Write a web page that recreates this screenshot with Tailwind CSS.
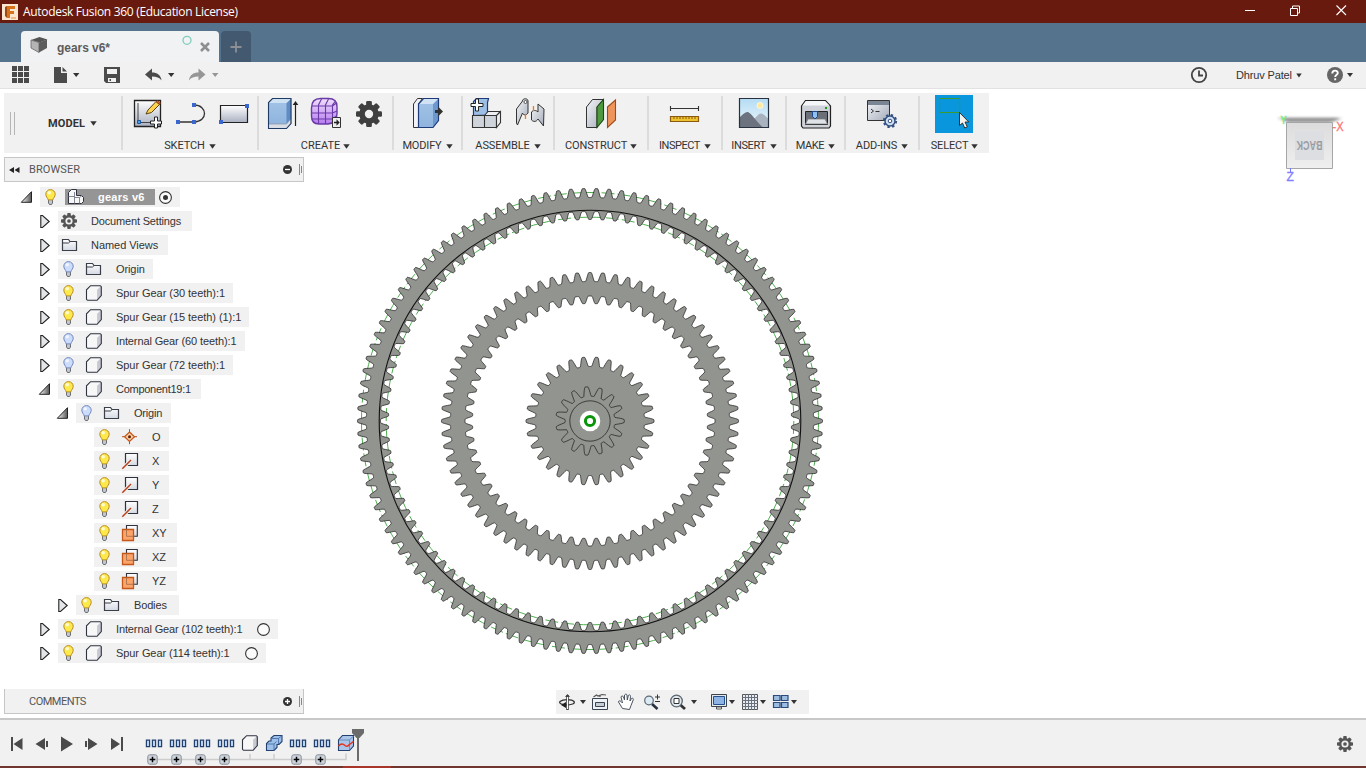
<!DOCTYPE html>
<html lang="en">
<head>
<meta charset="utf-8">
<title>Autodesk Fusion 360 (Education License)</title>
<script src="https://cdn.jsdelivr.net/npm/@tailwindcss/browser@4"></script>
</head>
<body class="w-[1366px] h-[768px] overflow-hidden flex flex-col bg-white font-['Liberation_Sans',Arial,sans-serif] text-[11px] text-[#333]">

<svg class="absolute w-0 h-0">
  <defs>
    <linearGradient id="gWhite" x1="0" y1="0" x2="0" y2="1"><stop offset="0" stop-color="#fff"/><stop offset="1" stop-color="#a9b0c0"/></linearGradient>
    <linearGradient id="gBlue" x1="0" y1="0" x2="0" y2="1"><stop offset="0" stop-color="#a3c4e6"/><stop offset="1" stop-color="#8fb4de"/></linearGradient>
    <linearGradient id="gSteel" x1="0" y1="0" x2="1" y2="1"><stop offset="0" stop-color="#f4f5f8"/><stop offset="1" stop-color="#a4acba"/></linearGradient>
    <linearGradient id="gPurple" x1="0" y1="0" x2="0" y2="1"><stop offset="0" stop-color="#efe0fb"/><stop offset="1" stop-color="#b67cf0"/></linearGradient>
    <linearGradient id="gTri" x1="0" y1="0" x2="1" y2="0"><stop offset="0" stop-color="#fff"/><stop offset="1" stop-color="#555"/></linearGradient>
    <linearGradient id="gSky" x1="0" y1="0" x2="0" y2="1"><stop offset="0" stop-color="#b4dcf4"/><stop offset="1" stop-color="#eef7fc"/></linearGradient>
    <linearGradient id="gDoc" x1="0" y1="0" x2="0" y2="1"><stop offset="0" stop-color="#fff"/><stop offset="1" stop-color="#d4d9e2"/></linearGradient>
    <linearGradient id="gCube" x1="0" y1="0" x2="0" y2="1"><stop offset="0" stop-color="#dcdcdc"/><stop offset="1" stop-color="#efefef"/></linearGradient>
    <symbol id="cog" viewBox="-10 -10 20 20">
      <g fill="currentColor"><rect id="ct" x="-2.2" y="-10" width="4.4" height="20" rx="1"/><use href="#ct" transform="rotate(45)"/><use href="#ct" transform="rotate(90)"/><use href="#ct" transform="rotate(135)"/></g>
      <circle r="5.3" fill="none" stroke="currentColor" stroke-width="4.4"/><circle r="3.2" fill="#f1f1f1"/>
    </symbol>
    <symbol id="cogDot" viewBox="-10 -10 20 20">
      <g fill="currentColor"><use href="#ct"/><use href="#ct" transform="rotate(45)"/><use href="#ct" transform="rotate(90)"/><use href="#ct" transform="rotate(135)"/></g>
      <circle r="6" fill="#f1f1f1" stroke="currentColor" stroke-width="3"/><circle r="2.300" fill="currentColor"/>
    </symbol>
    <symbol id="bulbOn" viewBox="0 0 24 20"><path d="M8.5 12h4v4l-1 1.5h-2l-1-1.5z" fill="#c4c8ce" stroke="#5d6064" stroke-width=".9"/><path d="M10.5 2.6a4.7 4.7 0 0 1 4.7 4.7c0 2.4-2 3.6-2.4 5.6H8.2c-.4-2-2.4-3.2-2.4-5.6a4.7 4.7 0 0 1 4.7-4.7z" fill="#fce94a" stroke="#b98a26"/><circle cx="9.2" cy="5.8" r="1.8" fill="#fffbd0"/></symbol>
    <symbol id="bulbOff" viewBox="0 0 24 20"><path d="M8.5 12h4v4l-1 1.5h-2l-1-1.5z" fill="#c4c8ce" stroke="#5d6064" stroke-width=".9"/><path d="M10.5 2.6a4.7 4.7 0 0 1 4.7 4.7c0 2.4-2 3.6-2.4 5.6H8.2c-.4-2-2.4-3.2-2.4-5.6a4.7 4.7 0 0 1 4.7-4.7z" fill="#ccdcfa" stroke="#7187bf"/><circle cx="9.2" cy="5.8" r="1.8" fill="#f0f5ff"/></symbol>
    <symbol id="part" viewBox="0 0 24 20"><path d="M4.5 17.3V6.8L8.6 2.7h10.7v9.900l-4.200 4.700z" fill="#f7f7f8"/><path d="M15.100 6.800l4.200-4.100v9.900l-4.200 4.700z" fill="#c6c9d0"/><path d="M4.500 16.300V6.800L8.600 2.700h9.700l1 1v8.900l-4.200 4.700H5.500z" fill="none" stroke="#2f3340" stroke-width="1.100"/></symbol>
    <symbol id="folder" viewBox="0 0 24 20"><path d="M4.500 15.500V4.500h6l1.500 2h6.500v9h-14z" fill="url(#gDoc)" stroke="#3a3f4a" stroke-width="1.200"/><path d="M5 8h5.500l1.500-1.400" fill="none" stroke="#3a3f4a"/></symbol>
    <symbol id="cogRow" viewBox="0 0 24 20"><use href="#cogDot" x="3" y="2" width="16" height="16" color="#555"/></symbol>
    <symbol id="asm" viewBox="0 0 24 20"><path d="M3.500 16.500V5.500l3-3h5v6h5l2 2v4l-2 2z" fill="#f7f7f8" stroke="#2f3340"/><path d="M3.500 9.500h6M9.500 5v11.500M9.500 10.500h5v6M14.500 10.500l2.500-2" fill="none" stroke="#777c88" stroke-width=".9"/></symbol>
    <symbol id="pt" viewBox="0 0 24 20"><path d="M11.500 2.200v15M4 9.700h15" stroke="#b8501c"/><path d="M11.500 5l5 4.700-5 4.700-5-4.700z" fill="#fbcfa6" stroke="#c4551c" stroke-width="1.200"/><circle cx="11.500" cy="9.700" r="1.500" fill="#5a1d00"/></symbol>
    <symbol id="axis" viewBox="0 0 24 20"><path d="M7.500 2.500h12v12h-12z" fill="url(#gDoc)" stroke="#2f3340" stroke-width="1.200"/><path d="M4 18l9-9" stroke="#f1f1f1" stroke-width="3.400"/><path d="M4.300 17.700l8.700-8.700" stroke="#b5421a" stroke-width="1.500"/></symbol>
    <symbol id="plane" viewBox="0 0 24 20"><path d="M8.500 2.500h10.800v10.800H8.500z" fill="url(#gDoc)" stroke="#2f3340" stroke-width="1.100"/><path d="M4.500 6.500h11v11h-11z" fill="#fda46a" stroke="#c4571a" stroke-width="1.300"/><path d="M8.500 7v6.300h6.500" fill="none" stroke="#b0764e"/></symbol>
    <symbol id="closed" viewBox="0 0 20 20"><path d="M2.800 4.500h1.700l6.700 6-6.700 6H2.800z" fill="#e4e6ea" stroke="#222" stroke-width="1.100"/></symbol>
    <symbol id="open" viewBox="0 0 20 20"><path d="M11.500 4.700v10.600H1.300z" fill="url(#gTri)" stroke="#222"/></symbol>
    <symbol id="dd" viewBox="0 0 7 5"><path d="M.3.3h6.400L3.500 4.700z" fill="#333"/></symbol>
    <symbol id="steps" viewBox="0 0 24 20"><g fill="#b7d2f2" stroke="#23406f" stroke-width="1.200"><path d="M4.400 6.600h3.200v6.600H4.400zM10.400 6.600h3.200v6.600h-3.200zM16.400 6.600h3.200v6.600h-3.200z"/></g></symbol>
    <symbol id="plusBox" viewBox="0 0 12 12"><rect x="1.300" y="1.300" width="9.400" height="9.400" rx="2" fill="#cfd5dd" stroke="#868c96"/><path d="M6 3.200v5.600M3.200 6h5.600" stroke="#000" stroke-width="1.500"/></symbol>
  </defs>
</svg>

<!-- Window title bar -->
<header class="h-[23px] shrink-0 bg-[#681a0e] flex items-center text-white">
  <svg class="ml-[2px] w-4 h-4" viewBox="0 0 16 16"><path d="M0 0h16v16H0z" fill="#fbe6d2"/><path d="M5 2h8v3H8v2h4v3H8v4H5z" fill="#d8721c"/><path d="M3 3l2-1v12l-2-2z" fill="#9c4a10"/><path d="M9 13h5v2H9z" fill="#efb98a"/></svg>
  <span class="ml-[5px] font-['Open_Sans',sans-serif] text-[12px] tracking-[-0.31px] leading-[23px] whitespace-pre">Autodesk Fusion 360 (Education License)</span>
  <svg class="ml-auto w-[126px] h-[23px]" viewBox="1240 0 126 23" fill="none" stroke="#fff"><path d="M1245 10.500h10"/><path d="M1290.500 8.500h7v7h-7zM1292.500 8.500v-2.500h7v7h-2"/><path d="M1336.500 5.500l9.500 9.500M1346 5.500l-9.500 9.500" stroke-width="1.100"/></svg>
</header>

<!-- Document tabs -->
<nav class="h-[39px] shrink-0 bg-[#56738d] flex items-end pl-[21px]">
  <div class="w-[198px] h-[31px] bg-[#f1f2f4] rounded-t-[4px] flex items-center">
    <svg class="w-[36px] h-[31px]" viewBox="21 31 36 31"><path d="M31 40l8.500-3 8 2.500-8 3z" fill="#555"/><path d="M31 40l8 2.500v10l-8-4.500z" fill="#b4b4b4" stroke="#666" stroke-width=".8"/><path d="M39 42.500l8-3v8.500l-8 4.500z" fill="#5c5c5c"/></svg>
    <span class="font-bold text-[12px] text-[#5c5c5c] tracking-[-0.05px] mt-[2px]">gears v6*</span>
    <svg class="ml-auto w-[39px] h-[31px]" viewBox="180 31 39 31" fill="none"><circle cx="187" cy="40.300" r="4" stroke="#7ecdb9" stroke-width="1.300"/><path d="M201 43l8 8M209 43l-8 8" stroke="#8e8e8e" stroke-width="2.500"/></svg>
  </div>
  <div class="ml-[2px] w-[30px] h-[31px] bg-[#435970] rounded-t-[4px] flex items-center justify-center">
    <svg class="w-3 h-3 mt-px" viewBox="0 0 12 12"><path d="M6 .5v11M.5 6h11" stroke="#8d8f94" stroke-width="1.800"/></svg>
  </div>
</nav>

<!-- Application bar -->
<div class="h-[27px] shrink-0 bg-[#f1f1f1] border-b border-[#e2e2e2] flex">
  <svg class="w-[45px] h-[26px]" viewBox="0 62 45 26" fill="#4b4b4b"><path d="M12 66h5v5h-5zM18 66h5v5h-5zM24 66h5v5h-5zM12 72h5v5h-5zM18 72h5v5h-5zM24 72h5v5h-5zM12 78h5v5h-5zM18 78h5v5h-5zM24 78h5v5h-5z"/></svg>
  <svg class="w-[50px] h-[26px]" viewBox="45 62 50 26" fill="#4b4b4b"><path d="M54 67h7v6h6v10H54zM62.500 67l4.500 4.500h-4.500z"/><path d="M73 73h6.400l-3.200 4z" fill="#333"/></svg>
  <svg class="w-[40px] h-[26px]" viewBox="95 62 40 26"><path d="M104 67h16v16h-14l-2-2z" fill="#4b4b4b"/><path d="M107 69h10v5h-10zM108 78h8v4h-8z" fill="#f1f1f1"/><path d="M109.500 79h1.500v2h-1.500z" fill="#4b4b4b"/></svg>
  <svg class="w-[50px] h-[26px]" viewBox="135 62 50 26"><path d="M145 74.500l7-6v4c5 0 9 2.500 9.500 8-2-3-5-4-9.500-4v4z" fill="#4b4b4b"/><path d="M168 73h6.400l-3.200 4z" fill="#333"/></svg>
  <svg class="w-[45px] h-[26px]" viewBox="185 62 45 26"><path d="M205.500 74.500l-7-6v4c-5 0-9 2.500-9.500 8 2-3 5-4 9.500-4v4z" fill="#969696"/><path d="M212 73h6.400l-3.200 4z" fill="#969696"/></svg>
  <svg class="ml-auto w-[40px] h-[26px]" viewBox="1180 62 40 26" fill="none" stroke="#444"><circle cx="1199" cy="75" r="7.200" stroke-width="1.800"/><path d="M1199 70.500v5h4" stroke-width="1.800"/></svg>
  <button class="w-[100px] pl-4 flex items-center"><span class="tracking-[-0.15px]">Dhruv Patel</span><svg class="w-[6px] h-[5px] ml-[4px]"><use href="#dd"/></svg></button>
  <svg class="w-[46px] h-[26px]" viewBox="1320 62 46 26"><circle cx="1335" cy="75" r="8" fill="#666"/><path d="M1332.300 73.500c0-3.800 5.500-3.600 5.500-.6 0 1.800-2.600 1.800-2.600 4M1335.200 78.200v2" fill="none" stroke="#fff" stroke-width="1.900"/><path d="M1347 73h6l-3 4z" fill="#333"/></svg>
</div>

<main class="relative flex-1 min-h-0 flex flex-col">
  <!-- 3D viewport -->
  <svg id="view" class="absolute inset-0 w-[1366px] h-[629px]" viewBox="0 89 1366 629"></svg>
  <svg class="absolute right-[16px] top-[21px] w-[74px] h-[76px]" viewBox="1276 110 74 76">
    <defs><filter id="soft" x="-20%" y="-200%" width="140%" height="500%"><feGaussianBlur stdDeviation="2.500 1"/></filter></defs>
    <path d="M1279 117.500h60v2l-8 3h-44z" fill="#999" filter="url(#soft)"/>
    <path d="M1286.500 122.500h46v46h-46z" fill="url(#gCube)" stroke="#a6a6a6"/>
    <path d="M1295 131h29v29h-29z" fill="#dcdee2"/>
    <text transform="rotate(180 1309.500 145.500)" x="1309.500" y="150" text-anchor="middle" textLength="26" lengthAdjust="spacingAndGlyphs" font-size="13" font-weight="bold" fill="#9a9ca2" font-family="Liberation Sans">BACK</text>
    <text x="1280.500" y="123.500" font-size="11" fill="#72ee72" stroke="#72ee72" stroke-width=".4" font-family="Liberation Sans" textLength="6" lengthAdjust="spacingAndGlyphs">Y</text>
    <text x="1332.500" y="131" font-size="12" fill="#ff7272" stroke="#ff7272" stroke-width=".3" font-family="Liberation Sans" textLength="11" lengthAdjust="spacingAndGlyphs">-X</text>
    <path d="M1290.500 168v4" stroke="#7878ff"/>
    <text x="1286.500" y="181" font-size="12" fill="#8080ff" stroke="#8080ff" stroke-width=".3" font-family="Liberation Sans">Z</text>
  </svg>

  <!-- Ribbon -->
  <section class="relative mt-1 ml-1 w-[985px] h-[60px] shrink-0 bg-[#f1f1f1] flex items-center font-[Roboto,sans-serif] text-[11px] text-[#333]">
    <div class="w-[117px] h-full flex items-center">
      <div class="ml-[6px] w-[5px] h-[23px] border-x border-[#b5b5b5]"></div>
      <span class="ml-[33px] mt-[3px] font-bold tracking-[0.1px]">MODEL</span><svg class="w-[7px] h-[5px] ml-[5px]"><use href="#dd"/></svg>
    </div>
    <i class="w-[2px] h-[54px] bg-[#dcdcdc]"></i>
    <div class="w-[134px] h-full pt-[2px] flex flex-col items-center">
      <div class="flex shrink-0">
        <svg class="w-[44px] h-[38px]" viewBox="124 95 44 38"><path d="M134.500 100.500h26v26h-26z" fill="url(#gWhite)" stroke="#222" stroke-width="1.300"/><path d="M138 103v19.500h14" fill="none" stroke="#444"/><path d="M137.500 120.500h3v3h-3z" fill="#4aa0e8" stroke="#1c56a0"/><path d="M146 114l2-4 8-8.500 3.500 3-8 8z" fill="#ffd34d" stroke="#5a4410"/><path d="M156 101.500l1.500-1 3 2.500-1 1.500z" fill="#d8693a" stroke="#7a3010" stroke-width=".7"/><path d="M154.500 117h3v4h4v3h-4v4h-3v-4h-4v-3h4z" fill="#fff" stroke="#222"/></svg>
        <svg class="w-[44px] h-[38px]" viewBox="168 95 44 38"><path d="M178 122h16c14 0 14-17 0-17" fill="none" stroke="#333" stroke-width="1.300"/><path d="M176 120h4v4h-4zM192 120h4v4h-4zM192 103h4v4h-4z" fill="#3a66cf"/></svg>
        <svg class="w-[44px] h-[38px]" viewBox="212 95 44 38"><path d="M220.500 105.500h27v17h-27z" fill="url(#gWhite)" stroke="#222" stroke-width="1.200"/><path d="M245 104h4v4h-4zM219 120h4v4h-4z" fill="#3a66cf"/></svg>
      </div>
      <div class="flex items-center h-[14px] mt-[6px] shrink-0"><span class="tracking-[-0.1px]">SKETCH</span><svg class="w-[7px] h-[5px] ml-[4px]"><use href="#dd"/></svg></div>
    </div>
    <i class="w-[2px] h-[54px] bg-[#dcdcdc]"></i>
    <div class="w-[133px] h-full pt-[2px] flex flex-col items-center">
      <div class="flex shrink-0">
        <svg class="w-[43px] h-[38px]" viewBox="261 95 43 38"><path d="M268.500 103l4-4.500h18l1 1v19l-4.500 5.500h-18.500z" fill="url(#gBlue)"/><path d="M268.500 124v4.500h18l4.500-5v-5l-4.500 5.500z" fill="#d9dde6" stroke="#8a90a0" stroke-width=".7"/><path d="M286.500 103l4.500-4v19.500l-4.500 5z" fill="#5f8cc4"/><path d="M268.500 103h18l4.500-4.500h-18.500z" fill="#cfe2f4"/><path d="M268.500 128.500v-26l4-4h18.500v25l-4.500 5z" fill="none" stroke="#1f3a64" stroke-width="1.100"/><path d="M295.500 126v-23" stroke="#222" stroke-width="1.200"/><path d="M292.700 105l2.800-4 2.800 4z" fill="#222"/></svg>
        <svg class="w-[43px] h-[38px]" viewBox="304 95 43 38"><path d="M311.500 108c0-7 3-9.500 9-9.500h8c6 0 8.500 3 8.500 8v7c0 7-4 10-9 10.500h-9c-5 0-7.500-2-7.500-8z" fill="url(#gPurple)" stroke="#6b3aa8" stroke-width="1.400"/><path d="M312 106h20.500l4-3M311.500 113h21l4.500-2M312 119h20.500l4-3M318.500 124v-19l3-6M325.500 124v-19l3-6M332.500 122v-17l3-4" fill="none" stroke="#6b3aa8" stroke-width="1.100"/><path d="M332.500 117.500h8v10h-8z" fill="#eee" stroke="#333"/><path d="M334 121.800h2.500v-2.500l3.200 3.200-3.200 3.200v-2.500H334z" fill="#222"/></svg>
        <svg class="w-[43px] h-[38px] text-[#3f3f3f]" viewBox="347 95 43 38"><use href="#cog" x="356" y="101" width="26" height="26"/></svg>
      </div>
      <div class="flex items-center h-[14px] mt-[6px] shrink-0"><span>CREATE</span><svg class="w-[7px] h-[5px] ml-[3px]"><use href="#dd"/></svg></div>
    </div>
    <i class="w-[2px] h-[54px] bg-[#dcdcdc]"></i>
    <div class="w-[67px] h-full pt-[2px] flex flex-col items-center">
      <svg class="w-[43px] h-[38px] shrink-0" viewBox="406 95 43 38"><path d="M413.500 104l4-5.500h5l-4 5.500v23.500h-5z" fill="#f2f3f6" stroke="#333"/><path d="M418.500 104l5-5.500h15v22l-5.500 7h-14.500z" fill="url(#gBlue)"/><path d="M433 104l5.500-5.500v22l-5.500 7z" fill="#6d98cf"/><path d="M418.500 104h14.500l5.500-5.500h-15z" fill="#d0e2f4"/><path d="M418.500 104l5-5.500h15v22l-5.500 7h-14.500z" fill="none" stroke="#1f3a78" stroke-width="1.200"/><path d="M435 110h3v-3.500l5 5-5 5v-3.500h-3z" fill="#333"/></svg>
      <div class="flex items-center h-[14px] mt-[6px] shrink-0"><span class="tracking-[-0.15px]">MODIFY</span><svg class="w-[7px] h-[5px] ml-[4px]"><use href="#dd"/></svg></div>
    </div>
    <i class="w-[2px] h-[54px] bg-[#dcdcdc]"></i>
    <div class="w-[90px] h-full pt-[2px] flex flex-col items-center">
      <div class="flex shrink-0">
        <svg class="w-[44px] h-[38px]" viewBox="464 95 44 38"><path d="M473.500 115.500v-14l3-3h12l-1 4v12.500z" fill="#9dbfe6" stroke="#1f3a78" stroke-width="1.200"/><path d="M472.500 115.500h12v12h-12zM484.500 115.500h12v12h-12z" fill="#cfd3da" stroke="#333" stroke-width="1.100"/><path d="M484.500 115.500l3.500-4h12l-3.500 4zM496.500 115.500l4-4v11l-4 5z" fill="#eceef1" stroke="#333" stroke-width="1.100"/><path d="M475.500 99h3v4.500h4.500v3h-4.500v4.500h-3v-4.500h-4.500v-3h4.500z" fill="#fff" stroke="#222"/></svg>
        <svg class="w-[44px] h-[38px]" viewBox="508 95 44 38"><path d="M516.500 109l6-8c0-3 5.500-3 5.500 0v12c-2 3-5 2-5.500 0l-5 12-1-2z" fill="url(#gSteel)" stroke="#333"/><circle cx="525.500" cy="102" r="1.500" fill="#fff" stroke="#333" stroke-width=".8"/><path d="M544 109l-6-5v8c-2-2-5-2-6.500 0v8c2 2 5 2 6.500-1l5.500 7z" fill="url(#gSteel)" stroke="#333"/><path d="M525.500 114v5M533.500 106v5" stroke="#f07818" stroke-width="1.300"/></svg>
      </div>
      <div class="flex items-center h-[14px] mt-[6px] shrink-0"><span class="tracking-[-0.1px]">ASSEMBLE</span><svg class="w-[7px] h-[5px] ml-[4px]"><use href="#dd"/></svg></div>
    </div>
    <i class="w-[2px] h-[54px] bg-[#dcdcdc]"></i>
    <div class="w-[92px] h-full pt-[2px] flex flex-col items-center">
      <svg class="w-[44px] h-[38px] shrink-0" viewBox="579 95 44 38"><path d="M586.500 107l6-7.500h11l-6.500 7.500v20.500h-10.500z" fill="url(#gSteel)" stroke="#333"/><path d="M597 107l6.500-7.500v20l-6.500 8z" fill="#4f9a3f" stroke="#1c4a16" stroke-width="1.100"/><path d="M607.500 107l8-7v20l-8 7.500z" fill="#ee955c" stroke="#a04a18" stroke-width="1.100"/></svg>
      <div class="flex items-center h-[14px] mt-[6px] shrink-0"><span class="tracking-[-0.1px]">CONSTRUCT</span><svg class="w-[7px] h-[5px] ml-[3px]"><use href="#dd"/></svg></div>
    </div>
    <i class="w-[2px] h-[54px] bg-[#dcdcdc]"></i>
    <div class="w-[72px] h-full pt-[2px] flex flex-col items-center">
      <svg class="w-[44px] h-[38px] shrink-0" viewBox="663 95 44 38"><path d="M670.500 106v5M698.500 106v5M671 108.500h27" stroke="#333" stroke-width="1.100" fill="none"/><path d="M670.500 116.500h28v5h-28z" fill="#ecc22e" stroke="#8a5a10" stroke-width="1.200"/><path d="M674 117v2M677 117v2M680 117v2M683 117v2M686 117v2M689 117v2M692 117v2M695 117v2" stroke="#8a5a10"/></svg>
      <div class="flex items-center h-[14px] mt-[6px] shrink-0"><span class="tracking-[-0.45px]">INSPECT</span><svg class="w-[7px] h-[5px] ml-[4px]"><use href="#dd"/></svg></div>
    </div>
    <i class="w-[2px] h-[54px] bg-[#dcdcdc]"></i>
    <div class="w-[62px] h-full pt-[2px] flex flex-col items-center">
      <svg class="w-[44px] h-[38px] shrink-0" viewBox="732 95 44 38"><path d="M739.500 98.500h29v29h-29z" fill="url(#gSky)"/><circle cx="760" cy="105.500" r="3" fill="#ffe9a0" stroke="#fff6d8"/><path d="M751 122l8-8c2-1 4-1 9.500 5v8h-20z" fill="#a9b3c0"/><path d="M740 117c4-4 6-5 8-5 3 1 7 8 15 15.500h-23z" fill="#6c737f"/><path d="M739.500 98.500h29v29h-29z" fill="none" stroke="#27313f" stroke-width="1.200"/></svg>
      <div class="flex items-center h-[14px] mt-[6px] shrink-0"><span class="tracking-[-0.35px]">INSERT</span><svg class="w-[7px] h-[5px] ml-[4px]"><use href="#dd"/></svg></div>
    </div>
    <i class="w-[2px] h-[54px] bg-[#dcdcdc]"></i>
    <div class="w-[57px] h-full pt-[2px] flex flex-col items-center">
      <svg class="w-[43px] h-[38px] shrink-0" viewBox="794 95 43 38"><path d="M801.500 106l4-5.500h20l5 5.500v20l-1.500 2h-26l-1.500-2z" fill="#cfd2d8" stroke="#222" stroke-width="1.200"/><path d="M802.500 105.500l3.500-4.500h19l4.500 4.500z" fill="#f5f6f8"/><path d="M805.500 111.500h22v13h-22z" fill="#6b7078" stroke="#222"/><path d="M808 119h17l2.500 5h-22z" fill="#dfe2e6" stroke="#777" stroke-width=".7"/><path d="M812.500 111.500h5v5l-2.500 2.500-2.500-2.500z" fill="#8fc0ee" stroke="#1c4a90"/><path d="M825 107h2v2h-2z" fill="#1d9a1d"/></svg>
      <div class="flex items-center h-[14px] mt-[6px] shrink-0"><span class="tracking-[-0.4px]">MAKE</span><svg class="w-[7px] h-[5px] ml-[4px]"><use href="#dd"/></svg></div>
    </div>
    <i class="w-[2px] h-[54px] bg-[#dcdcdc]"></i>
    <div class="w-[72px] h-full pt-[2px] flex flex-col items-center">
      <svg class="w-[44px] h-[38px] shrink-0" viewBox="860 95 44 38"><path d="M867.500 100.500h22v20h-22z" fill="url(#gSteel)" stroke="#333"/><path d="M868 101h21v4h-21z" fill="#7b8694"/><path d="M871 109l2.500 2-2.500 2M875.500 111.500h4" fill="none" stroke="#333"/><circle cx="890" cy="121" r="5" fill="#cfe0f6" stroke="#33507e" stroke-width="1.500"/><circle cx="890" cy="121" r="6.200" fill="none" stroke="#33507e" stroke-width="1.800" stroke-dasharray="2.430 2.440"/><circle cx="890" cy="121" r="1.800" fill="#fff" stroke="#33507e"/></svg>
      <div class="flex items-center h-[14px] mt-[6px] shrink-0"><span class="tracking-[-0.1px]">ADD-INS</span><svg class="w-[7px] h-[5px] ml-[4px]"><use href="#dd"/></svg></div>
    </div>
    <i class="w-[2px] h-[54px] bg-[#dcdcdc]"></i>
    <div class="w-[69px] h-full pt-[2px] flex flex-col items-center">
      <svg class="w-[43px] h-[38px] shrink-0" viewBox="933 95 43 38"><path d="M935 95h38v38h-38z" fill="#0a96dc"/><path d="M939.500 98.500h20v14h-20z" fill="none" stroke="#3d9b2e" stroke-width="1.100"/><path d="M959.500 112.500v13l3-2.500 2.200 5 2.600-1.200-2.300-4.800h3.800z" fill="#f2f2f2" stroke="#222" stroke-width=".9"/></svg>
      <div class="flex items-center h-[14px] mt-[6px] shrink-0"><span class="tracking-[-0.15px]">SELECT</span><svg class="w-[7px] h-[5px] ml-[3px]"><use href="#dd"/></svg></div>
    </div>
  </section>

  <!-- Browser -->
  <section class="relative mt-1 ml-1 w-[300px] h-[25px] shrink-0 bg-[#f1f1f1] border border-[#c6c6c6] flex items-center font-[Roboto,sans-serif] text-[#555]">
    <svg class="w-[11px] h-[6px] ml-[4px]" viewBox="0 0 11 6"><path d="M5 0v6L0 3zM10.500 0v6l-5-3z" fill="#222"/></svg>
    <span class="ml-[9px] mt-[2px] tracking-[0.1px]">BROWSER</span>
    <svg class="ml-auto w-[22px] h-[23px]" viewBox="281 158 22 23"><circle cx="287.500" cy="169.500" r="4.500" fill="#333"/><path d="M285 169.500h5" stroke="#fff" stroke-width="1.300"/><path d="M299.500 164v11M301.500 166v7" stroke="#888"/></svg>
  </section>
  <div id="tree" class="relative mt-[3px] flex flex-col items-start"></div>

  <!-- Comments and navigation -->
  <div class="relative mt-auto mb-1 pl-1 flex items-end">
    <section class="w-[300px] h-[25px] bg-[#f1f1f1] border border-t-0 border-[#c6c6c6] flex items-center font-[Roboto,sans-serif] text-[#555]">
      <span class="ml-[24px] mt-[2px] tracking-[-0.5px]">COMMENTS</span>
      <svg class="ml-auto w-[22px] h-[23px]" viewBox="281 690 22 23"><circle cx="287.500" cy="701.500" r="4.500" fill="#333"/><path d="M285 701.500h5M287.500 699v5" stroke="#fff" stroke-width="1.300"/><path d="M299.500 696v11M301.500 698v7" stroke="#888"/></svg>
    </section>
    <section class="ml-[252px] w-[253px] h-6 bg-[#f1f1f1] flex">
      <svg class="w-[33px] h-6" viewBox="556 690 33 24"><path d="M563 704.500c-3-.5-4-2-3-3 3-2.500 12-2.500 14 0 1.500 2-2 3.500-9 3.500" fill="none" stroke="#333" stroke-width="1.300"/><path d="M567.500 695v15" stroke="#444" stroke-width="2.600"/><path d="M567.500 696v13" stroke="#fff"/><path d="M565 697l2.500-3 2.500 3z" fill="#444"/><path d="M566 702v6l-5-3z" fill="#222"/><path d="M580 700h6l-3 4z" fill="#333"/></svg>
      <svg class="w-[23px] h-6" viewBox="589 690 23 24"><path d="M592.500 698.500h15v11h-15z" fill="#eef1f5" stroke="#3a4350"/><path d="M595.500 702.500h9v4h-9z" fill="#c5ccd6" stroke="#3a4350"/><path d="M593.500 697l3-2 1.500 1 4-1.500 4 .5M600 697v-2" fill="none" stroke="#555" stroke-width="1.200"/></svg>
      <svg class="w-[26px] h-6" viewBox="612 690 26 24"><path d="M622.500 708.500l-4-6.500c0-1.500 1.500-1.500 2.500-.5l1.500 1.500-1.500-6c.5-1.500 2-1.200 2.500 0l1 3v-5c.8-1.200 2.200-1 2.500 0l.3 5 1-4.500c1-1.200 2.300-.5 2.200.8l-.5 4.700 1.500-2.500c1-.8 2 0 1.800 1.200l-2.300 5.800-1.500 4z" fill="#fff" stroke="#4a5260"/></svg>
      <svg class="w-[26px] h-6" viewBox="638 690 26 24"><path d="M652 704l5.500 5" stroke="#26303e" stroke-width="2.600"/><circle cx="649" cy="700.500" r="4.300" fill="#dceaf3" stroke="#5a6878" stroke-width="1.200"/><path d="M657.500 694.500v5M655 697h5M655 701.500h5" stroke="#333"/></svg>
      <svg class="w-[38px] h-6" viewBox="664 690 38 24"><path d="M680 704.500l5 4.500" stroke="#333" stroke-width="2.800"/><circle cx="676.500" cy="701" r="5.800" fill="#dfe9ee" stroke="#5a6570" stroke-width="1.300"/><path d="M674 698.500h5v5h-5z" fill="#fff" stroke="#333"/><path d="M691 700h6l-3 4z" fill="#333"/></svg>
      <svg class="w-[36px] h-6" viewBox="702 690 36 24"><path d="M711.500 694.500h15v12h-15z" fill="#e6e8ec" stroke="#3a4350"/><path d="M713.500 696.500h11v8h-11z" fill="#8eb4e6" stroke="#24508e"/><path d="M716.500 707h5v2h-5z" fill="#fff" stroke="#555"/><path d="M729 700h6l-3 4z" fill="#333"/></svg>
      <svg class="w-[30px] h-6" viewBox="738 690 30 24"><path d="M742.500 694.500h15v15h-15z" fill="#e9edf2" stroke="#555"/><path d="M745.500 694v16M748.500 694v16M751.500 694v16M754.500 694v16M742 697.500h16M742 700.500h16M742 703.500h16M742 706.500h16" stroke="#68707c"/><path d="M760 700h6l-3 4z" fill="#333"/></svg>
      <svg class="w-[41px] h-6" viewBox="768 690 41 24"><path d="M773.500 695.500h6.500v5h-6.500zM781.500 695.500h6.500v5h-6.500zM773.500 702.500h6.500v5h-6.500zM781.500 702.500h6.500v5h-6.500z" fill="#9dbce2" stroke="#2c4a7a" stroke-width="1.200"/><path d="M791 700h6l-3 4z" fill="#333"/></svg>
    </section>
  </div>
</main>

<!-- Timeline -->
<footer class="h-[48px] shrink-0 bg-[#f1f1f1] border-t-2 border-[#c8c8c8] flex">
  <svg class="w-[28px] h-[46px]" viewBox="0 720 28 46" fill="#4a4a4a"><path d="M11 737h2v14h-2zM22.500 738v12l-9-6z"/></svg>
  <svg class="w-[24px] h-[46px]" viewBox="28 720 24 46" fill="#4a4a4a"><path d="M45 738v12l-9.500-6zM46 741h2v6h-2z"/></svg>
  <svg class="w-[27px] h-[46px]" viewBox="52 720 27 46" fill="#4a4a4a"><path d="M61 736.500v15l12-7.500z"/></svg>
  <svg class="w-[24px] h-[46px]" viewBox="79 720 24 46" fill="#4a4a4a"><path d="M88 738v12l9.500-6zM85 741h2v6h-2z"/></svg>
  <svg class="w-[39px] h-[46px]" viewBox="103 720 39 46" fill="#4a4a4a"><path d="M111 738v12l9-6zM121 737h2v14h-2z"/></svg>
  <svg class="w-[230px] h-[46px]" viewBox="142 720 230 46">
    <path d="M152 759.500h194v-6M250 754v5M274 754v5" fill="none" stroke="#cdcdcd" stroke-width="1.500"/>
    <use href="#steps" x="142" y="733.500" width="24" height="20"/><use href="#steps" x="166" y="733.500" width="24" height="20"/><use href="#steps" x="190" y="733.500" width="24" height="20"/><use href="#steps" x="214" y="733.500" width="24" height="20"/><use href="#steps" x="286" y="733.500" width="24" height="20"/><use href="#steps" x="310" y="733.500" width="24" height="20"/>
    <use href="#plusBox" x="146.500" y="753.500" width="12" height="12"/><use href="#plusBox" x="170.500" y="753.500" width="12" height="12"/><use href="#plusBox" x="194.500" y="753.500" width="12" height="12"/><use href="#plusBox" x="218.500" y="753.500" width="12" height="12"/><use href="#plusBox" x="290.500" y="753.500" width="12" height="12"/><use href="#plusBox" x="314.500" y="753.500" width="12" height="12"/>
    <use href="#part" x="238" y="733" width="24" height="20"/>
    <path d="M266.500 750.500v-7l2.500-2.500h2v-3l3-2.500h8v6l-3 3h-2v3l-3 3z" fill="#9dc0ea" stroke="#23406f" stroke-width="1.100"/><path d="M267 744h7v6.500M271 738.500h7.500l3-2.500M278.500 738.500v5.500M274 744l2.500-2.500" fill="none" stroke="#4a6fa8" stroke-width=".9"/>
    <path d="M338.500 750V740l4-4.500h11v10.500l-4 4.500h-11z" fill="#a9c6ea" stroke="#23406f" stroke-width="1.100"/><path d="M339 740h10.500v10M349.500 740l4-4" fill="none" stroke="#6d8dbd"/><path d="M338.500 746c2.500-3 4.500-2.500 6.500-.5 2 1.500 3 1 4.500-1l4-3" fill="none" stroke="#e8321e" stroke-width="1.500"/>
    <path d="M352 729h12v4l-4.500 5h-3l-4.500-5z" fill="#6b6b6b"/><path d="M357 736h2v25h-2z" fill="#6b6b6b"/>
  </svg>
  <svg class="ml-auto mr-[13px] w-4 h-4 mt-[16px] text-[#555]"><use href="#cogDot"/></svg>
</footer>
<div class="h-[2px] shrink-0 bg-[#71352f] flex"><div class="ml-[343px] w-[48px] bg-[#a8352a]"></div></div>

<script>
// Browser tree: [x of the row box, box width, arrow, bulb, icon, label, radio, letter spacing]
const rows = [
  [40,140,'open','bulbOn','asm','gears v6','root'],
  [58,134,'closed','','cogRow','Document Settings','',-.17],
  [58,110,'closed','','folder','Named Views','',-.05],
  [58,95,'closed','bulbOff','folder','Origin','',-.1],
  [58,175,'closed','bulbOn','part','Spur Gear (30 teeth):1','',-.05],
  [58,191,'closed','bulbOn','part','Spur Gear (15 teeth) (1):1','',-.05],
  [58,187,'closed','bulbOff','part','Internal Gear (60 teeth):1','',-.12],
  [58,175,'closed','bulbOff','part','Spur Gear (72 teeth):1','',-.05],
  [58,143,'open','bulbOn','part','Component19:1','',-.27],
  [76,95,'open','bulbOff','folder','Origin','',-.2],
  [94,75,'','bulbOn','pt','O'],
  [94,75,'','bulbOn','axis','X'],
  [94,75,'','bulbOn','axis','Y'],
  [94,75,'','bulbOn','axis','Z'],
  [94,83,'','bulbOn','plane','XY'],
  [94,83,'','bulbOn','plane','XZ'],
  [94,83,'','bulbOn','plane','YZ'],
  [76,103,'closed','bulbOn','folder','Bodies','',-.15],
  [58,220,'closed','bulbOn','part','Internal Gear (102 teeth):1','radio',-.12],
  [58,208,'closed','bulbOn','part','Spur Gear (114 teeth):1','radio',-.08],
];
document.getElementById('tree').innerHTML = rows.map(([x,w,arrow,bulb,icon,label,radio,ls]) => {
  const a = `<svg class="w-5 h-5 shrink-0">${arrow ? `<use href="#${arrow}"/>` : ''}</svg>`;
  const b = bulb ? `<svg class="w-6 h-5 shrink-0"><use href="#${bulb}"/></svg>` : '';
  const i = `<svg class="w-6 h-5 shrink-0"><use href="#${icon}"/></svg>`;
  const body = radio === 'root'
    ? `${b}<div class="ml-px w-[90px] h-4 bg-[#959595] flex items-center"><svg class="w-6 h-5 shrink-0"><use href="#asm"/></svg><span class="ml-[9px] font-bold text-white whitespace-nowrap tracking-[0.25px]">${label}</span></div>`
    : `${b}${i}<span class="${bulb ? 'ml-[10px]' : 'ml-[9px]'} whitespace-nowrap" style="letter-spacing:${ls || 0}px">${label}</span>`;
  const r = radio ? `<svg class="ml-auto mr-[8px] w-[13px] h-[13px] shrink-0" viewBox="0 0 13 13"><circle cx="6.500" cy="6.500" r="5.900" fill="#fbfbfb" stroke="#333" stroke-width="1.100"/>${radio === 'root' ? '<circle cx="6.500" cy="6.500" r="2.500" fill="#333"/>' : ''}</svg>` : '';
  return `<div class="h-6 flex items-center" style="padding-left:${x-20}px">${a}<div class="h-5 bg-[#f1f1f1] flex items-center" style="width:${w}px">${body}${r}</div></div>`;
}).join('');

// Gear outlines around the common centre
const cx = 590, cy = 421;
function gear(n, tip, root, phase) {
  const a = 0.09, b = 0.37, steps = 20;
  let d = '';
  for (let k = 0; k < n * steps; k++) {
    const u = k / steps, f = Math.abs(u - Math.round(u));
    let t = Math.min(1, Math.max(0, (b - f) / (b - a)));
    t = 0.35 * t + 0.65 * t * t * (3 - 2 * t);
    const r = root + (tip - root) * t, th = (u + phase) * 2 * Math.PI / n;
    d += (k ? 'L' : 'M') + (cx + r * Math.cos(th)).toFixed(2) + ' ' + (cy + r * Math.sin(th)).toFixed(2);
  }
  return d + 'Z';
}
const ink = 'stroke="#222" stroke-width=".75"';
document.getElementById('view').innerHTML = `
  <g fill="none" stroke="#4fae4f" stroke-width="1"><circle cx="590" cy="421" r="228.500" stroke-dasharray="13 3"/><circle cx="590" cy="421" r="203.800" stroke-dasharray="13 3"/></g>
  <path fill="#92948f" fill-rule="evenodd" ${ink} d="${gear(114,232.5,223.5,0)} ${gear(102,201.5,209.5,0.5)}"/>
  <circle cx="590" cy="421" r="210.800" fill="none" stroke="#111" stroke-width="1.100"/>
  <path fill="#92948f" fill-rule="evenodd" ${ink} d="${gear(72,148.5,139.5,0)} ${gear(60,117.5,125,0.5)}"/>
  <path fill="#92948f" ${ink} d="${gear(30,64,54.5,0)}"/>
  <path fill="none" ${ink} d="${gear(15,34.3,24.8,0)}"/>
  <circle cx="590" cy="421" r="20.200" fill="none" ${ink}/>
  <circle cx="590" cy="421" r="10.300" fill="#fff"/>
  <circle cx="590" cy="421" r="4.600" fill="#fff" stroke="#0a960a" stroke-width="3"/>`;
</script>
</body>
</html>
